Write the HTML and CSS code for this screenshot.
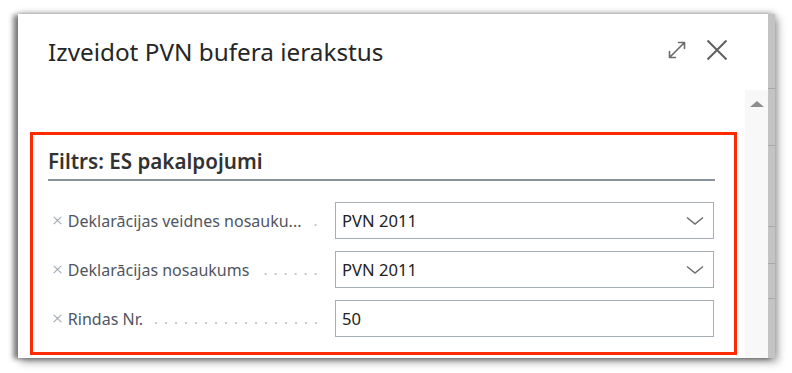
FILE: index.html
```html
<!DOCTYPE html>
<html lang="lv">
<head>
<meta charset="utf-8">
<title>Izveidot PVN bufera ierakstus</title>
<link rel="stylesheet" href="styles.css">
</head>
<body>
<div class="frame">
  <div class="dialog">
    <div class="header">
      <h1 class="title">Izveidot PVN bufera ierakstus</h1>
      <div class="actions">
        <svg class="icon-expand" width="20" height="20" viewBox="0 0 20 20" aria-label="Izvērst">
          <path d="M2.5 17.5 L17.5 2.5 M11.5 2.5 H17.5 V8.5 M2.5 11.5 V17.5 H8.5" fill="none" stroke="#6b6b6b" stroke-width="1.6" stroke-linecap="round" stroke-linejoin="round"/>
        </svg>
        <svg class="icon-close" width="22" height="22" viewBox="0 0 22 22" aria-label="Aizvērt">
          <path d="M1.5 1.5 L20.5 20.5 M20.5 1.5 L1.5 20.5" fill="none" stroke="#5f5f5f" stroke-width="2"/>
        </svg>
      </div>
    </div>
    <section class="filter">
      <h2 class="filter-title">Filtrs: ES pakalpojumi</h2>
      <div class="rows">
        <div class="row">
          <div class="label"><span class="x">×</span><span class="text">Deklarācijas veidnes nosauku...</span><span class="leader"></span></div>
          <div class="input select"><span>PVN 2011</span>
            <svg width="18" height="10" viewBox="0 0 18 10"><path d="M1 1.5 L9 8 L17 1.5" fill="none" stroke="#6e6e6e" stroke-width="1.5"/></svg>
          </div>
        </div>
        <div class="row">
          <div class="label"><span class="x">×</span><span class="text">Deklarācijas nosaukums</span><span class="leader"></span></div>
          <div class="input select"><span>PVN 2011</span>
            <svg width="18" height="10" viewBox="0 0 18 10"><path d="M1 1.5 L9 8 L17 1.5" fill="none" stroke="#6e6e6e" stroke-width="1.5"/></svg>
          </div>
        </div>
        <div class="row">
          <div class="label"><span class="x">×</span><span class="text">Rindas Nr.</span><span class="leader"></span></div>
          <div class="input"><span>50</span></div>
        </div>
      </div>
    </section>
  </div>
  <div class="scrollbar">
    <div class="track"><span class="arrow"></span></div>
  </div>
  <div class="strip">
    <span class="mark m1"></span>
    <span class="mark m2"></span>
    <span class="mark m3"></span>
    <span class="mark m4"></span>
    <span class="mark m5"></span>
  </div>
</div>
</body>
</html>
```

FILE: styles.css
```css
html, body {
  margin: 0;
  padding: 0;
  background: #ffffff;
}
body {
  font-family: "Noto Sans", "Open Sans", "DejaVu Sans", sans-serif;
  width: 792px;
  height: 373px;
  overflow: hidden;
}
.frame {
  margin: 14px 0 0 18px;
  width: 757px;
  height: 344px;
  display: flex;
  background: #ffffff;
  box-shadow: -5px 1px 5px rgba(0, 0, 0, 0.45), 3px 4px 8px rgba(0, 0, 0, 0.35), 0 -2px 6px rgba(0, 0, 0, 0.15);
}
.dialog {
  width: 727px;
  display: flex;
  flex-direction: column;
}
.header {
  display: flex;
  justify-content: space-between;
  align-items: flex-start;
  padding: 23px 17px 0 30px;
}
.title {
  margin: 0;
  font-size: 24.3px;
  line-height: 30px;
  font-weight: 400;
  color: #262626;
}
.actions {
  display: flex;
  align-items: center;
  gap: 19px;
  margin-top: 2px;
}
.filter {
  margin: 65px 8px 0 12px;
  border: 3px solid #ff2a00;
  padding: 14px 19px 15px 15px;
}
.filter-title {
  margin: 0;
  font-size: 20.6px;
  line-height: 24px;
  font-weight: 600;
  color: #323232;
  padding-bottom: 6px;
  border-bottom: 2px solid #8a94a0;
}
.rows {
  margin-top: 21px;
  display: flex;
  flex-direction: column;
  gap: 12px;
}
.row {
  display: flex;
  align-items: center;
}
.label {
  box-sizing: border-box;
  width: 287px;
  display: flex;
  align-items: baseline;
  padding-left: 4px;
  font-size: 16px;
  color: #50565f;
}
.x {
  color: #9aa2ad;
  font-size: 19px;
  font-weight: 300;
  line-height: 16px;
  margin-right: 5px;
}
.text {
  white-space: nowrap;
}
.leader {
  flex: 1;
  height: 4px;
  margin: 0 14px 0 10px;
  background-image: radial-gradient(circle, #c8c8c8 0.9px, transparent 1.3px);
  background-size: 10px 4px;
  background-repeat: repeat-x;
  background-position: right center;
}
.input {
  width: 379px;
  height: 37px;
  box-sizing: border-box;
  border: 1px solid #a6adb7;
  display: flex;
  align-items: center;
  justify-content: space-between;
  padding: 0 9px 0 6px;
  font-size: 16.6px;
  color: #222222;
}
.scrollbar {
  width: 23px;
  display: flex;
  flex-direction: column;
}
.track {
  margin-top: 76px;
  flex: 1;
  background: #f8f8f8;
  display: flex;
  justify-content: center;
}
.arrow {
  margin-top: 11px;
  width: 0;
  height: 0;
  border-left: 7px solid transparent;
  border-right: 7px solid transparent;
  border-bottom: 6px solid #8e8e8e;
}
.strip {
  width: 7px;
  background: #c3c3c3;
  display: flex;
  flex-direction: column;
}
.mark {
  height: 1px;
  background: #a8a8a8;
}
.m1 { margin-top: 74px; }
.m2 { margin-top: 56px; }
.m3 { margin-top: 80px; }
.m4 { margin-top: 36px; }
.m5 { margin-top: 34px; }
```
